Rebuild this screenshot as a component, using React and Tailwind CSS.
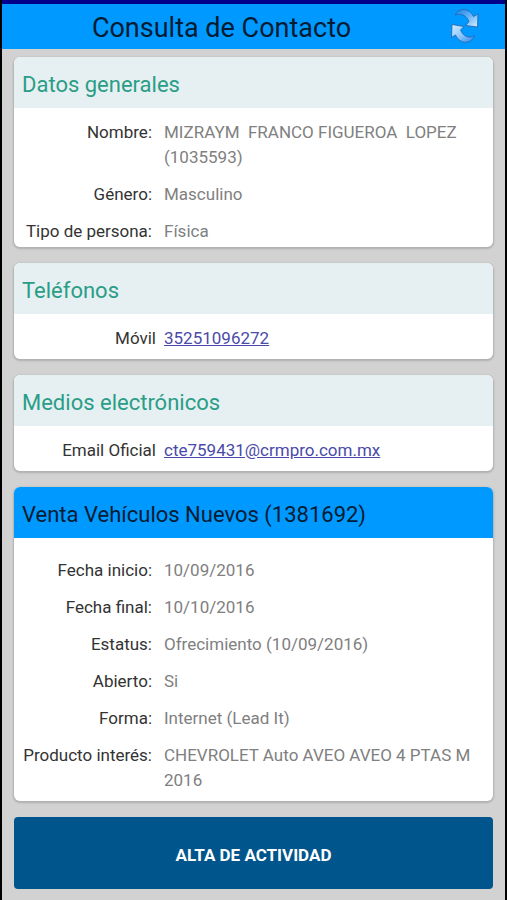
import { useId } from "react";

const general = [
    { label: "Nombre:", value: "MIZRAYM  FRANCO FIGUEROA  LOPEZ (1035593)" },
    { label: "Género:", value: "Masculino" },
    { label: "Tipo de persona:", value: "Física" },
];

const venta = [
    { label: "Fecha inicio:", value: "10/09/2016" },
    { label: "Fecha final:", value: "10/10/2016" },
    { label: "Estatus:", value: "Ofrecimiento (10/09/2016)" },
    { label: "Abierto:", value: "Si" },
    { label: "Forma:", value: "Internet (Lead It)" },
    { label: "Producto interés:", value: "CHEVROLET Auto AVEO AVEO 4 PTAS M 2016" },
];

const RefreshIcon = () => {
    const id = useId();

    return (
        <svg viewBox="0 0 32 36" className="w-8 h-9" aria-hidden="true">
            <defs>
                <linearGradient id={`${id}-top`} x1="0" y1="0" x2="1" y2="1">
                    <stop offset="0" stopColor="#1f7fe6" />
                    <stop offset="0.45" stopColor="#5aaef6" />
                    <stop offset="1" stopColor="#d8efff" />
                </linearGradient>
                <linearGradient id={`${id}-bottom`} x1="0" y1="0" x2="1" y2="1">
                    <stop offset="0" stopColor="#d8efff" />
                    <stop offset="0.5" stopColor="#8cc8fb" />
                    <stop offset="1" stopColor="#2f86e8" />
                </linearGradient>
            </defs>
            <g stroke="#2468b4" strokeWidth="0.9" strokeLinejoin="round">
                <path
                    fill={`url(#${id}-top)`}
                    d="M6 7 C10 -0.500 20 -0.500 24.500 8.500 L29 6 L28.500 19 L16.500 17.500 L20 13.500 C17 7 12 5 6 7 Z"
                />
                <path
                    fill={`url(#${id}-bottom)`}
                    d="M25.500 28 C21.500 36.500 11 36.500 6.500 27 L2.500 29.500 L3 16.500 L15 18.500 L11.500 22 C14.500 28.500 19.500 30.500 25.500 28 Z"
                />
            </g>
        </svg>
    );
};

const Card = ({ title, highlight, children }) => (
    <section className="overflow-hidden rounded-md bg-white shadow-[0_1px_2px_1px_#b0b0b0]">
        <h2
            className={
                highlight
                    ? "h-[51px] px-2 pt-1 flex items-center bg-[#0099ff] text-[22px] text-[#041c33]"
                    : "h-[51px] px-2 pt-1 flex items-center bg-[#e6f0f2] text-[22px] text-[#2a9d87]"
            }
        >
            {title}
        </h2>
        {children}
    </section>
);

const Details = ({ rows }) => (
    <dl className="space-y-3">
        {rows.map((row) => (
            <div key={row.label} className="flex gap-3">
                <dt className="w-[138px] shrink-0 text-right text-[#333333]">{row.label}</dt>
                <dd className="pr-2 whitespace-pre-wrap text-[#808080]">{row.value}</dd>
            </div>
        ))}
    </dl>
);

const LinkRow = ({ label, href, text }) => (
    <div className="flex gap-2 pt-3 pb-2">
        <span className="w-[142px] shrink-0 text-right text-[#333333]">{label}</span>
        <a href={href} className="text-[#4a4aa8] underline">{text}</a>
    </div>
);

const App = () => {
    return (
        <div className="min-h-screen border-x-2 border-black bg-[#d2d2d2] font-['Roboto',sans-serif] text-[17px] leading-[25px]">
            <header className="relative flex h-[49px] items-center justify-center border-t-4 border-[#00008b] bg-[#0099ff]">
                <h1 className="pt-1 pr-16 text-[27px] text-[#041c33]">Consulta de Contacto</h1>
                <button type="button" aria-label="Actualizar" className="absolute right-6 top-1">
                    <RefreshIcon />
                </button>
            </header>

            <main className="flex flex-col gap-4 px-3 pt-2 pb-3">
                <Card title="Datos generales">
                    <div className="pt-3 pb-[3px]">
                        <Details rows={general} />
                    </div>
                </Card>

                <Card title="Teléfonos">
                    <LinkRow label="Móvil" href="tel:35251096272" text="35251096272" />
                </Card>

                <Card title="Medios electrónicos">
                    <LinkRow label="Email Oficial" href="mailto:cte759431@crmpro.com.mx" text="cte759431@crmpro.com.mx" />
                </Card>

                <Card title="Venta Vehículos Nuevos (1381692)" highlight>
                    <div className="pt-5 pb-2">
                        <Details rows={venta} />
                    </div>
                </Card>

                <button type="button" className="h-18 rounded-sm bg-[#00558c] pt-1 font-bold text-white">
                    ALTA DE ACTIVIDAD
                </button>
            </main>
        </div>
    );
};

export default App;
